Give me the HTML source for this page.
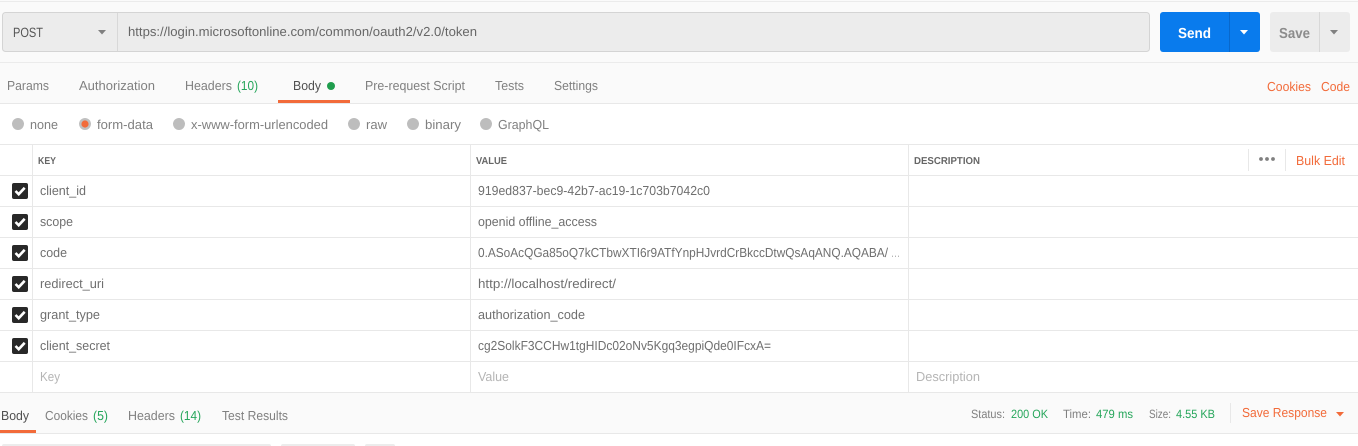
<!DOCTYPE html>
<html><head><meta charset="utf-8"><style>
html,body{margin:0;padding:0;background:#fff;width:1358px;height:446px;overflow:hidden}
svg{display:block}
text{font-family:"Liberation Sans",sans-serif;font-size:13px;fill:#808080;text-rendering:geometricPrecision}
.k{fill:#6f6f6f}
.g{fill:#26a65b}
.o{fill:#f26b3a}
.h{font-size:10px;font-weight:bold;fill:#666}
.p{fill:#b5b5b5}
.s{font-size:12px}
</style></head><body>
<svg width="1358" height="446" viewBox="0 0 1358 446" xmlns="http://www.w3.org/2000/svg">
<rect x="0" y="0" width="1358" height="103" fill="#fafafa"/>
<rect x="0" y="1" width="1358" height="1" fill="#ebebeb"/>
<rect x="0" y="62" width="1358" height="1" fill="#ebebeb"/>
<rect x="0" y="103" width="1358" height="1" fill="#e8e8e8"/>
<rect x="2.5" y="12.5" width="1147" height="39" rx="3" fill="#ececec" stroke="#d4d4d4"/>
<rect x="117" y="13" width="1" height="38" fill="#d8d8d8"/>
<text x="13" y="37" textLength="30" lengthAdjust="spacingAndGlyphs" style="fill:#555;font-size:13.5px">POST</text>
<path d="M98 30h8l-4 4.5z" fill="#808080"/>
<text x="128" y="36" textLength="349" lengthAdjust="spacingAndGlyphs" style="fill:#666">https://login.microsoftonline.com/common/oauth2/v2.0/token</text>
<rect x="1160" y="12" width="100" height="40" rx="3" fill="#097bed"/>
<rect x="1229" y="12" width="1" height="40" fill="#0868cc"/>
<text x="1178" y="38" textLength="33" lengthAdjust="spacingAndGlyphs" style="fill:#fff;font-weight:bold;font-size:14.5px">Send</text>
<path d="M1240 30h8l-4 4.5z" fill="#fff"/>
<rect x="1270" y="12" width="80" height="40" rx="3" fill="#ececec"/>
<rect x="1319" y="12" width="1" height="40" fill="#d8d8d8"/>
<text x="1279" y="38" textLength="31" lengthAdjust="spacingAndGlyphs" style="font-weight:bold;font-size:14.5px;fill:#8c8c8c">Save</text>
<path d="M1330 30h8l-4 4.5z" fill="#808080"/>

<text x="7" y="90" textLength="42" lengthAdjust="spacingAndGlyphs">Params</text>
<text x="79" y="90" textLength="76" lengthAdjust="spacingAndGlyphs">Authorization</text>
<text x="185" y="90" textLength="47" lengthAdjust="spacingAndGlyphs">Headers</text>
<text x="237" y="90" textLength="21" lengthAdjust="spacingAndGlyphs" class="g">(10)</text>
<text x="293" y="90" textLength="28" lengthAdjust="spacingAndGlyphs" style="fill:#505050">Body</text>
<circle cx="331" cy="86" r="4" fill="#1f9d4d"/>
<rect x="278" y="100" width="72" height="3" fill="#f26b3a"/>
<text x="365" y="90" textLength="100" lengthAdjust="spacingAndGlyphs">Pre-request Script</text>
<text x="495" y="90" textLength="29" lengthAdjust="spacingAndGlyphs">Tests</text>
<text x="554" y="90" textLength="44" lengthAdjust="spacingAndGlyphs">Settings</text>
<text x="1267" y="91" textLength="44" lengthAdjust="spacingAndGlyphs" class="o">Cookies</text>
<text x="1321" y="91" textLength="29" lengthAdjust="spacingAndGlyphs" class="o">Code</text>

<circle cx="18" cy="124" r="6" fill="#bdbdbd"/>
<text x="30" y="129" textLength="28" lengthAdjust="spacingAndGlyphs">none</text>
<circle cx="85" cy="124" r="6" fill="#c0c0c0"/>
<circle cx="85" cy="124" r="3.6" fill="#f26b3a"/>
<text x="97" y="129" textLength="56" lengthAdjust="spacingAndGlyphs">form-data</text>
<circle cx="179" cy="124" r="6" fill="#bdbdbd"/>
<text x="191" y="129" textLength="137" lengthAdjust="spacingAndGlyphs">x-www-form-urlencoded</text>
<circle cx="354" cy="124" r="6" fill="#bdbdbd"/>
<text x="366" y="129" textLength="21" lengthAdjust="spacingAndGlyphs">raw</text>
<circle cx="413" cy="124" r="6" fill="#bdbdbd"/>
<text x="425" y="129" textLength="36" lengthAdjust="spacingAndGlyphs">binary</text>
<circle cx="486" cy="124" r="6" fill="#bdbdbd"/>
<text x="498" y="129" textLength="51" lengthAdjust="spacingAndGlyphs">GraphQL</text>

<g fill="#e8e8e8">
<rect x="0" y="144" width="1358" height="1"/>
<rect x="0" y="175" width="1358" height="1"/>
<rect x="0" y="206" width="1358" height="1"/>
<rect x="0" y="237" width="1358" height="1"/>
<rect x="0" y="268" width="1358" height="1"/>
<rect x="0" y="299" width="1358" height="1"/>
<rect x="0" y="330" width="1358" height="1"/>
<rect x="0" y="361" width="1358" height="1"/>
<rect x="0" y="392" width="1358" height="1"/>
<rect x="32" y="144" width="1" height="249"/>
<rect x="470" y="144" width="1" height="249"/>
<rect x="908" y="144" width="1" height="249"/>
<rect x="1248" y="149" width="1" height="22"/>
<rect x="1285" y="149" width="1" height="22"/>
</g>
<text x="38" y="164" textLength="18" lengthAdjust="spacingAndGlyphs" class="h">KEY</text>
<text x="476" y="164" textLength="31" lengthAdjust="spacingAndGlyphs" class="h">VALUE</text>
<text x="914" y="164" textLength="66" lengthAdjust="spacingAndGlyphs" class="h">DESCRIPTION</text>
<g fill="#808080"><circle cx="1261" cy="159" r="1.9"/><circle cx="1267" cy="159" r="1.9"/><circle cx="1273" cy="159" r="1.9"/></g>
<text x="1296" y="165" textLength="49" lengthAdjust="spacingAndGlyphs" class="o">Bulk Edit</text>

<g id="checks">
<rect x="12" y="183" width="16" height="16" rx="2" fill="#282828"/><path d="M15.5 191l3.2 3.2 6-6.4" fill="none" stroke="#fff" stroke-width="2.6"/>
<rect x="12" y="214" width="16" height="16" rx="2" fill="#282828"/><path d="M15.5 222l3.2 3.2 6-6.4" fill="none" stroke="#fff" stroke-width="2.6"/>
<rect x="12" y="245" width="16" height="16" rx="2" fill="#282828"/><path d="M15.5 253l3.2 3.2 6-6.4" fill="none" stroke="#fff" stroke-width="2.6"/>
<rect x="12" y="276" width="16" height="16" rx="2" fill="#282828"/><path d="M15.5 284l3.2 3.2 6-6.4" fill="none" stroke="#fff" stroke-width="2.6"/>
<rect x="12" y="307" width="16" height="16" rx="2" fill="#282828"/><path d="M15.5 315l3.2 3.2 6-6.4" fill="none" stroke="#fff" stroke-width="2.6"/>
<rect x="12" y="338" width="16" height="16" rx="2" fill="#282828"/><path d="M15.5 346l3.2 3.2 6-6.4" fill="none" stroke="#fff" stroke-width="2.6"/>
</g>
<text x="40" y="195" textLength="46" lengthAdjust="spacingAndGlyphs" class="k">client_id</text>
<text x="40" y="226" textLength="33" lengthAdjust="spacingAndGlyphs" class="k">scope</text>
<text x="40" y="257" textLength="27" lengthAdjust="spacingAndGlyphs" class="k">code</text>
<text x="40" y="288" textLength="64" lengthAdjust="spacingAndGlyphs" class="k">redirect_uri</text>
<text x="40" y="319" textLength="60" lengthAdjust="spacingAndGlyphs" class="k">grant_type</text>
<text x="40" y="350" textLength="70" lengthAdjust="spacingAndGlyphs" class="k">client_secret</text>
<text x="40" y="381" textLength="20" lengthAdjust="spacingAndGlyphs" class="p">Key</text>

<text x="478" y="195" textLength="232" lengthAdjust="spacingAndGlyphs" class="k">919ed837-bec9-42b7-ac19-1c703b7042c0</text>
<text x="478" y="226" textLength="119" lengthAdjust="spacingAndGlyphs" class="k">openid offline_access</text>
<text x="478" y="257" textLength="410" lengthAdjust="spacingAndGlyphs" class="k">0.ASoAcQGa85oQ7kCTbwXTI6r9ATfYnpHJvrdCrBkccDtwQsAqANQ.AQABA/</text>
<text x="891" y="257" textLength="9" lengthAdjust="spacingAndGlyphs" class="p">...</text>
<text x="478" y="288" textLength="138" lengthAdjust="spacingAndGlyphs" class="k">http://localhost/redirect/</text>
<text x="478" y="319" textLength="107" lengthAdjust="spacingAndGlyphs" class="k">authorization_code</text>
<text x="478" y="350" textLength="293" lengthAdjust="spacingAndGlyphs" class="k">cg2SolkF3CCHw1tgHIDc02oNv5Kgq3egpiQde0IFcxA=</text>
<text x="478" y="381" textLength="31" lengthAdjust="spacingAndGlyphs" class="p">Value</text>
<text x="916" y="381" textLength="64" lengthAdjust="spacingAndGlyphs" class="p">Description</text>

<rect x="0" y="393" width="1358" height="40" fill="#fafafa"/>
<rect x="0" y="433" width="1358" height="1" fill="#e8e8e8"/>
<text x="1" y="420" textLength="28" lengthAdjust="spacingAndGlyphs" style="fill:#505050">Body</text>
<rect x="0" y="430" width="36" height="3" fill="#f26b3a"/>
<text x="45" y="420" textLength="43" lengthAdjust="spacingAndGlyphs">Cookies</text>
<text x="93" y="420" textLength="15" lengthAdjust="spacingAndGlyphs" class="g">(5)</text>
<text x="128" y="420" textLength="47" lengthAdjust="spacingAndGlyphs">Headers</text>
<text x="180" y="420" textLength="21" lengthAdjust="spacingAndGlyphs" class="g">(14)</text>
<text x="222" y="420" textLength="66" lengthAdjust="spacingAndGlyphs">Test Results</text>

<text x="971" y="418" textLength="34" lengthAdjust="spacingAndGlyphs" class="s">Status:</text>
<text x="1011" y="418" textLength="37" lengthAdjust="spacingAndGlyphs" class="s g">200 OK</text>
<text x="1063" y="418" textLength="28" lengthAdjust="spacingAndGlyphs" class="s">Time:</text>
<text x="1096" y="418" textLength="37" lengthAdjust="spacingAndGlyphs" class="s g">479 ms</text>
<text x="1149" y="418" textLength="22" lengthAdjust="spacingAndGlyphs" class="s">Size:</text>
<text x="1176" y="418" textLength="39" lengthAdjust="spacingAndGlyphs" class="s g">4.55 KB</text>
<rect x="1230" y="403" width="1" height="20" fill="#e8e8e8"/>
<text x="1242" y="417" textLength="85" lengthAdjust="spacingAndGlyphs" class="o">Save Response</text>
<path d="M1336 412h8l-4 4.5z" fill="#f26b3a"/>

<rect x="2" y="444" width="269" height="4" rx="2" fill="#ececec"/>
<rect x="281" y="444" width="74" height="4" rx="2" fill="#ececec"/>
<rect x="365" y="444" width="30" height="4" rx="2" fill="#ececec"/>
</svg>
</body></html>
